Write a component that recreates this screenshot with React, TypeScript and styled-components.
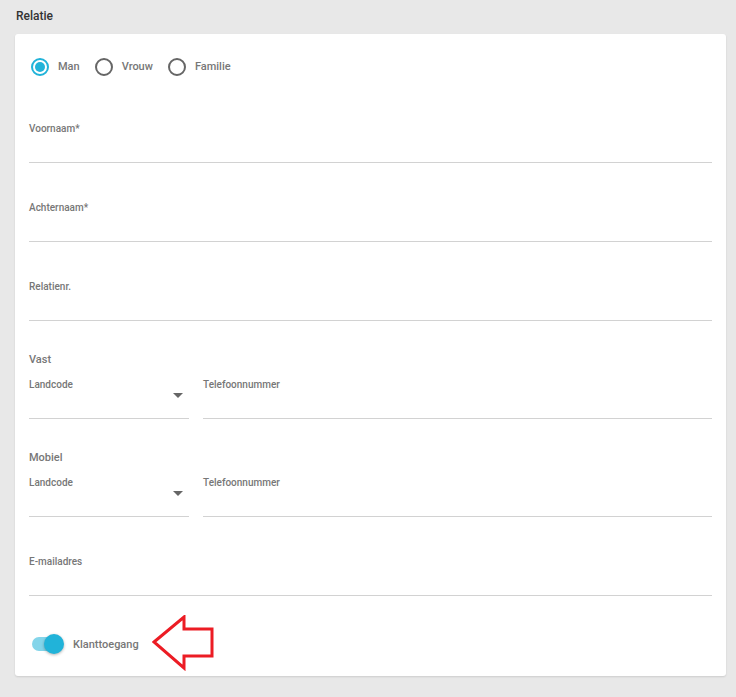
import React, { useState } from 'react'
import { styled, createGlobalStyle } from 'styled-components'

const GlobalStyle = createGlobalStyle`
  html, body {
    margin: 0;
    padding: 0;
    background: #e8e8e8;
    font-family: Roboto, 'Liberation Sans', Arial, sans-serif;
  }
`

const Page = styled.div`
  padding: 8px 10px 21px 15px;
`

const Title = styled.h2`
  margin: 0 0 10px 1px;
  font-size: 12px;
  line-height: 16px;
  font-weight: 500;
  color: #333;
`

const Card = styled.div`
  background: #fff;
  border-radius: 3px;
  box-shadow: 0 1px 2px rgba(0, 0, 0, 0.12);
  padding: 23px 14px 22px 14px;
  display: flex;
  flex-direction: column;
`

const RadioRow = styled.div`
  display: flex;
  align-items: center;
  gap: 15px;
  padding-left: 2px;
  margin-bottom: 46px;
  height: 19px;
`

const RadioLabel = styled.label`
  display: flex;
  align-items: center;
  gap: 9px;
  font-size: 11px;
  font-weight: 500;
  color: #777;
  cursor: pointer;
`

const RadioCircle = styled.span<{ $checked?: boolean }>`
  width: 18px;
  height: 18px;
  box-sizing: border-box;
  border-radius: 50%;
  border: 2px solid ${(p) => (p.$checked ? '#21b3d9' : '#666')};
  display: flex;
  align-items: center;
  justify-content: center;

  &::after {
    content: '';
    width: 10px;
    height: 10px;
    border-radius: 50%;
    background: #21b3d9;
    display: ${(p) => (p.$checked ? 'block' : 'none')};
  }
`

const Field = styled.div<{ $gap?: number }>`
  display: flex;
  flex-direction: column;
  margin-top: ${(p) => p.$gap ?? 0}px;
  flex: 1;
  position: relative;
`

const FieldLabel = styled.label`
  font-size: 10px;
  line-height: 14px;
  font-weight: 500;
  color: #777;
`

const FieldInput = styled.input`
  height: 26px;
  border: none;
  border-bottom: 1px solid #d2d2d2;
  outline: none;
  padding: 0;
  font-family: inherit;
  font-size: 12px;
  color: #333;
  background: transparent;
`

const Caret = styled.span`
  position: absolute;
  right: 6px;
  top: 15px;
  width: 0;
  height: 0;
  border-left: 5px solid transparent;
  border-right: 5px solid transparent;
  border-top: 5px solid #666;
`

const GroupHeading = styled.div<{ $gap: number }>`
  margin-top: ${(p) => p.$gap}px;
  font-size: 11px;
  line-height: 16px;
  font-weight: 500;
  color: #777;
  margin-bottom: 10px;
`

const PhoneRow = styled.div`
  display: flex;
  gap: 14px;
`

const CodeField = styled(Field)`
  flex: 0 0 160px;
`

const ToggleRow = styled.div`
  display: flex;
  align-items: center;
  margin-top: 38px;
  padding-left: 3px;
  height: 20px;
`

const Track = styled.span<{ $on: boolean }>`
  position: relative;
  width: 29px;
  height: 14px;
  border-radius: 7px;
  background: ${(p) => (p.$on ? '#84d5ea' : '#bbb')};
  cursor: pointer;
`

const Thumb = styled.span<{ $on: boolean }>`
  position: absolute;
  top: -3px;
  left: ${(p) => (p.$on ? '12px' : '-3px')};
  width: 20px;
  height: 20px;
  border-radius: 50%;
  background: ${(p) => (p.$on ? '#21b3d9' : '#f5f5f5')};
  box-shadow: 0 1px 3px rgba(0, 0, 0, 0.3);
`

const ToggleLabel = styled.span`
  margin-left: 12px;
  font-size: 11px;
  font-weight: 500;
  color: #777;
`

const ArrowMark = styled.svg`
  margin-left: 13px;
  margin-top: -2px;
  flex: none;
`

const PhoneGroup = ({ title, gap }: { title: string; gap: number }) => (
  <>
    <GroupHeading $gap={gap}>{title}</GroupHeading>
    <PhoneRow>
      <CodeField>
        <FieldLabel>Landcode</FieldLabel>
        <FieldInput readOnly />
        <Caret />
      </CodeField>
      <Field>
        <FieldLabel>Telefoonnummer</FieldLabel>
        <FieldInput />
      </Field>
    </PhoneRow>
  </>
)

export default function App() {
  const [relation, setRelation] = useState('man')
  const [access, setAccess] = useState(true)
  const options = [
    { id: 'man', label: 'Man' },
    { id: 'vrouw', label: 'Vrouw' },
    { id: 'familie', label: 'Familie' },
  ]

  return (
    <Page>
      <GlobalStyle />
      <Title>Relatie</Title>
      <Card>
        <RadioRow>
          {options.map((o) => (
            <RadioLabel key={o.id} onClick={() => setRelation(o.id)}>
              <RadioCircle $checked={relation === o.id} />
              {o.label}
            </RadioLabel>
          ))}
        </RadioRow>

        <Field>
          <FieldLabel>Voornaam*</FieldLabel>
          <FieldInput />
        </Field>
        <Field $gap={38}>
          <FieldLabel>Achternaam*</FieldLabel>
          <FieldInput />
        </Field>
        <Field $gap={38}>
          <FieldLabel>Relatienr.</FieldLabel>
          <FieldInput />
        </Field>

        <PhoneGroup title='Vast' gap={31} />
        <PhoneGroup title='Mobiel' gap={31} />

        <Field $gap={38}>
          <FieldLabel>E-mailadres</FieldLabel>
          <FieldInput />
        </Field>

        <ToggleRow>
          <Track $on={access} onClick={() => setAccess((v) => !v)}>
            <Thumb $on={access} />
          </Track>
          <ToggleLabel>Klanttoegang</ToggleLabel>
          <ArrowMark width='64' height='56' viewBox='0 0 64 56'>
            <polygon
              points='2,27 32,2 32,14 60,14 60,41 32,41 32,53'
              fill='none'
              stroke='#ec1c24'
              strokeWidth='3'
              strokeLinejoin='miter'
            />
          </ArrowMark>
        </ToggleRow>
      </Card>
    </Page>
  )
}
